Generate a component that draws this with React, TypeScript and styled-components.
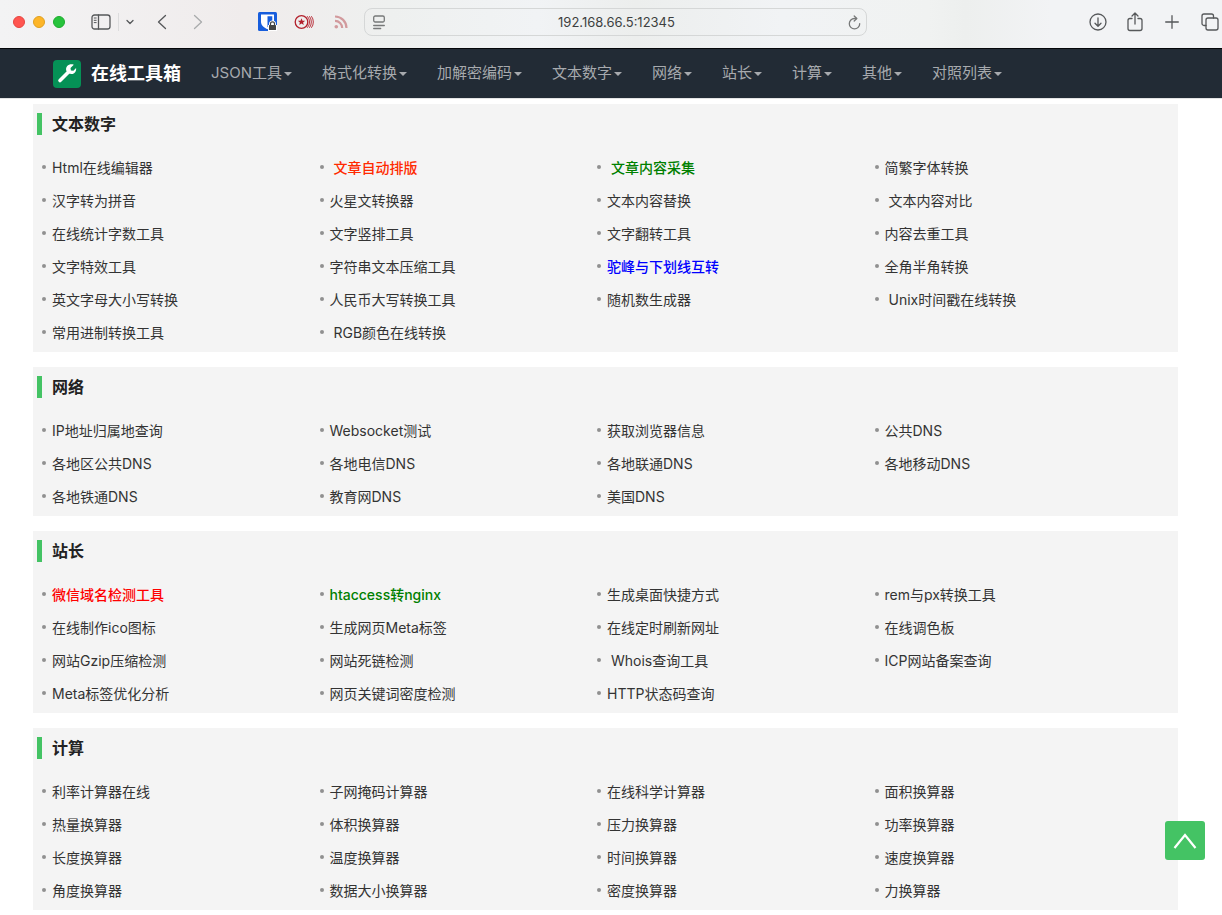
import React from "react";
import styled, { createGlobalStyle } from "styled-components";

const GlobalStyle = createGlobalStyle`
  *, *::before, *::after { box-sizing: border-box; }
  body {
    margin: 0;
    background: #fff;
    color: #333;
    font-family: Inter, "Noto Sans CJK SC", sans-serif;
    font-size: 14px;
  }
  a { color: inherit; text-decoration: none; }
  button { font: inherit; color: inherit; border: 0; padding: 0; background: none; cursor: pointer; }
  ul { list-style: none; margin: 0; padding: 0; }
`;

/* Browser window */

const Toolbar = styled.div`
  display: grid;
  grid-template-columns: 364px minmax(200px, 503px) 1fr;
  align-items: center;
  height: 48px;
  padding-bottom: 4px;
  overflow: hidden;
  color: #56585a;
  background: linear-gradient(90deg, #f3f3f4 0%, #f0ecec 20%, #eef0ef 32%, #f1f3f5 44%, #eceeed 52%, #f1f3f5 64%, #f0f2f1 76%, #edefee 79%, #f2f3f5 86%, #f2f3f5 100%);
`;

const ToolGroup = styled.div`
  display: flex;
  align-items: center;
`;

const Lights = styled(ToolGroup)`
  gap: 8px;
  padding-left: 13px;
  margin-right: 25px;
`;

const Light = styled.button<{ $fill: string; $edge: string }>`
  width: 12px;
  height: 12px;
  border-radius: 50%;
  background: ${(p) => p.$fill};
  border: 1px solid ${(p) => p.$edge};
`;

const ToolButton = styled.button<{ $w: number; $gap?: number; $color?: string }>`
  display: flex;
  flex: none;
  justify-content: center;
  width: ${(p) => p.$w}px;
  margin-left: ${(p) => p.$gap ?? 0}px;
  color: ${(p) => p.$color ?? "inherit"};
`;

const Divider = styled.span`
  width: 1px;
  height: 18px;
  margin-left: 7px;
  background: #dcdcdd;
`;

const AddressBar = styled.form`
  display: flex;
  align-items: center;
  height: 28px;
  padding: 0 5px 0 8px;
  border: 1px solid #d5d7d7;
  border-radius: 8px;
`;

const Address = styled.input`
  flex: 1;
  min-width: 0;
  border: 0;
  outline: 0;
  padding: 0;
  background: none;
  text-align: center;
  color: #3d3f40;
  font-family: Inter, sans-serif;
  font-size: 13px;
`;

const RightTools = styled(ToolGroup)`
  justify-content: flex-end;
  gap: 19px;
  padding-right: 2px;
`;

const Stroke = styled.svg`
  display: block;
  fill: none;
  stroke: currentColor;
  stroke-linecap: round;
  stroke-linejoin: round;
  stroke-width: 1.3;
`;

/* Site header */

const Header = styled.header`
  display: flex;
  align-items: center;
  height: 51px;
  padding: 0 53px;
  background: #222b35;
  border-top: 1px solid #05070a;
  border-bottom: 1px solid #e2e3e4;
`;

const Brand = styled.a`
  display: flex;
  align-items: center;
  gap: 10px;
  margin-right: 30px;
  color: #fff;
  font-size: 18px;
  font-weight: 700;
  line-height: 28px;
  white-space: nowrap;
`;

const Nav = styled.nav`
  display: flex;
  gap: 30px;
  padding-bottom: 2px;
`;

const NavItem = styled.button`
  display: flex;
  align-items: center;
  gap: 2px;
  color: #a7aaae;
  font-size: 15px;
  line-height: 22px;
  white-space: nowrap;

  &::after {
    content: "";
    margin-top: 2px;
    border: 4px solid transparent;
    border-top-color: currentColor;
    border-bottom: 0;
  }
`;

/* Tool lists */

const Main = styled.main`
  display: flex;
  flex-direction: column;
  gap: 15px;
  padding: 5px 44px 5px 33px;
`;

const Panel = styled.section`
  padding: 9px 26px 4px 4px;
  background: #f4f4f4;
`;

const PanelTitle = styled.h2`
  margin: 0 0 15px;
  padding-left: 10px;
  border-left: 5px solid #44c364;
  color: #222;
  font-size: 16px;
  font-weight: 700;
  line-height: 22px;
`;

const LinkGrid = styled.ul`
  display: grid;
  grid-template-columns: repeat(4, 1fr);
  padding-left: 5px;
`;

const LinkItem = styled.li<{ $indent?: boolean; $color?: string }>`
  display: flex;
  align-items: center;
  gap: ${(p) => (p.$indent ? 10 : 6)}px;
  height: 33px;
  color: ${(p) => p.$color ?? "#333"};
  font-weight: ${(p) => (p.$color ? 500 : 400)};
  white-space: nowrap;

  &::before {
    content: "";
    width: 4px;
    height: 4px;
    border-radius: 50%;
    background: #909090;
  }
`;

const BackToTop = styled.button`
  position: fixed;
  right: 17px;
  bottom: 55px;
  display: flex;
  align-items: center;
  justify-content: center;
  width: 40px;
  height: 39px;
  border-radius: 3px;
  color: #fff;
  background: #44c364;
`;

type Tool = { name: string; indent?: boolean; color?: string };
const plain = (...names: string[]): Tool[] => names.map((name) => ({ name }));

const panels: { title: string; tools: Tool[] }[] = [
  {
    title: "文本数字",
    tools: [
      { name: "Html在线编辑器" },
      { name: "文章自动排版", indent: true, color: "#ff2a00" },
      { name: "文章内容采集", indent: true, color: "#008000" },
      ...plain("简繁字体转换", "汉字转为拼音", "火星文转换器", "文本内容替换"),
      { name: "文本内容对比", indent: true },
      ...plain("在线统计字数工具", "文字竖排工具", "文字翻转工具", "内容去重工具", "文字特效工具", "字符串文本压缩工具"),
      { name: "驼峰与下划线互转", color: "#0000ff" },
      ...plain("全角半角转换", "英文字母大小写转换", "人民币大写转换工具", "随机数生成器"),
      { name: "Unix时间戳在线转换", indent: true },
      { name: "常用进制转换工具" },
      { name: "RGB颜色在线转换", indent: true },
    ],
  },
  {
    title: "网络",
    tools: plain(
      "IP地址归属地查询", "Websocket测试", "获取浏览器信息", "公共DNS",
      "各地区公共DNS", "各地电信DNS", "各地联通DNS", "各地移动DNS",
      "各地铁通DNS", "教育网DNS", "美国DNS",
    ),
  },
  {
    title: "站长",
    tools: [
      { name: "微信域名检测工具", color: "#ff0000" },
      { name: "htaccess转nginx", color: "#008000" },
      ...plain(
        "生成桌面快捷方式", "rem与px转换工具",
        "在线制作ico图标", "生成网页Meta标签", "在线定时刷新网址", "在线调色板",
        "网站Gzip压缩检测", "网站死链检测",
      ),
      { name: "Whois查询工具", indent: true },
      ...plain("ICP网站备案查询", "Meta标签优化分析", "网页关键词密度检测", "HTTP状态码查询"),
    ],
  },
  {
    title: "计算",
    tools: plain(
      "利率计算器在线", "子网掩码计算器", "在线科学计算器", "面积换算器",
      "热量换算器", "体积换算器", "压力换算器", "功率换算器",
      "长度换算器", "温度换算器", "时间换算器", "速度换算器",
      "角度换算器", "数据大小换算器", "密度换算器", "力换算器",
    ),
  },
];

const menus = ["JSON工具", "格式化转换", "加解密编码", "文本数字", "网络", "站长", "计算", "其他", "对照列表"];

function BrowserToolbar() {
  return (
    <Toolbar>
      <ToolGroup>
        <Lights>
          <Light aria-label="Close" $fill="#ff5550" $edge="#e64540" />
          <Light aria-label="Minimize" $fill="#fdb528" $edge="#e0a020" />
          <Light aria-label="Zoom" $fill="#27c33c" $edge="#1dac2e" />
        </Lights>
        <ToolButton aria-label="Sidebar" $w={20} $gap={1}>
          <Stroke width="20" height="16" viewBox="0 0 20 16">
            <rect x="1" y="1" width="18" height="14" rx="2.5" />
            <path d="M7.5 1v14" />
            <path d="M3.2 4h2M3.2 6.3h2M3.2 8.6h2" strokeWidth="1" />
          </Stroke>
        </ToolButton>
        <Divider />
        <ToolButton aria-label="Tab groups" $w={8} $gap={7}>
          <Stroke width="8" height="6" viewBox="0 0 8 6"><path d="M1 1.5l3 3 3-3" /></Stroke>
        </ToolButton>
        <ToolButton aria-label="Back" $w={10} $gap={23}>
          <Stroke width="10" height="16" viewBox="0 0 10 16"><path d="M8.5 1.5L1.5 8l7 6.5" /></Stroke>
        </ToolButton>
        <ToolButton aria-label="Forward" $w={10} $gap={26} $color="#a9abac">
          <Stroke width="10" height="16" viewBox="0 0 10 16"><path d="M1.5 1.5l7 6.500-7 6.500" /></Stroke>
        </ToolButton>
        <ToolButton aria-label="Password manager" $w={20} $gap={55}>
          <svg width="20" height="20" viewBox="0 0 20 20">
            <rect width="19" height="19" rx="1.5" fill="#175ddc" />
            <path d="M3 2.5h13V10c0 3.5-3.5 5.800-6.500 7.300C6.500 15.800 3 13.500 3 10z" fill="#fff" />
            <path d="M9.5 4.2h4.800V10c0 2.200-2.600 4-4.800 5.200z" fill="#175ddc" />
            <path d="M10 13h1v-1a3.500 3.500 0 0 1 7 0v1h1v6h-9z" fill="#fff" />
            <rect x="11" y="13" width="7" height="5" rx="0.5" fill="#444" />
            <path d="M12.5 13v-1.200a2 2 0 0 1 4 0V13" fill="none" stroke="#444" strokeWidth="1.2" />
          </svg>
        </ToolButton>
        <ToolButton aria-label="Media sniffer" $w={20} $gap={16} $color="#b3202c">
          <Stroke width="20" height="16" viewBox="0 0 20 16">
            <circle cx="7.5" cy="8" r="6.3" />
            <path d="M7.5 4.2l1 2.500 2.700.1-2.100 1.700.7 2.600-2.300-1.500-2.300 1.500.7-2.600-2.100-1.700 2.700-.1z" fill="currentColor" stroke="none" />
            <path d="M13.5 2.5a8 8 0 0 1 0 11M15.600 2.500a9 9 0 0 1 0 11M17.600 2.500a9 9 0 0 1 0 11" strokeWidth="0.9" />
          </Stroke>
        </ToolButton>
        <ToolButton aria-label="RSS" $w={14} $gap={20} $color="#d29a9d">
          <svg width="14" height="14" viewBox="0 0 14 14" fill="none" stroke="currentColor" strokeWidth="2.2">
            <circle cx="2.3" cy="11.7" r="1.8" fill="currentColor" stroke="none" />
            <path d="M1 5.800a7.200 7.200 0 0 1 7.200 7.200M1 1.500A11.500 11.500 0 0 1 12.500 13" />
          </svg>
        </ToolButton>
      </ToolGroup>
      <AddressBar onSubmit={(e) => e.preventDefault()}>
        <ToolButton type="button" aria-label="Page menu" $w={12} $color="#777979">
          <Stroke width="12" height="15" viewBox="0 0 12 15">
            <rect x="0.7" y="1" width="10.6" height="6" rx="1.5" />
            <path d="M0.7 10.5h10.600M0.700 13.500h7" />
          </Stroke>
        </ToolButton>
        <Address aria-label="Address" defaultValue="192.168.66.5:12345" />
        <ToolButton type="submit" aria-label="Reload" $w={13} $color="#777979">
          <Stroke width="13" height="15" viewBox="0 0 13 15">
            <path d="M11.7 8.7A5.200 5.200 0 1 1 6.500 3.500h2" />
            <path d="M6.2 1l2.600 2.500-2.600 2.500" />
          </Stroke>
        </ToolButton>
      </AddressBar>
      <RightTools>
        <ToolButton aria-label="Downloads" $w={18}>
          <Stroke width="18" height="18" viewBox="0 0 18 18">
            <circle cx="9" cy="9" r="8" />
            <path d="M9 5v8M6 10.200l3 3 3-3" />
          </Stroke>
        </ToolButton>
        <ToolButton aria-label="Share" $w={18}>
          <Stroke width="16" height="20" viewBox="0 0 16 20">
            <path d="M5 6.500H3A2 2 0 0 0 1 8.500v8a2 2 0 0 0 2 2h10a2 2 0 0 0 2-2v-8a2 2 0 0 0-2-2h-2M8 12V1.200M5 4l3-3 3 3" />
          </Stroke>
        </ToolButton>
        <ToolButton aria-label="New tab" $w={18}>
          <Stroke width="14" height="14" viewBox="0 0 14 14"><path d="M7 .7v12.600M.7 7h12.600" /></Stroke>
        </ToolButton>
        <ToolButton aria-label="Tab overview" $w={20}>
          <Stroke width="18" height="18" viewBox="0 0 18 18">
            <rect x="5" y="5" width="12" height="12" rx="2" />
            <path d="M5 12.500H3a2 2 0 0 1-2-2V3a2 2 0 0 1 2-2h7.500a2 2 0 0 1 2 2v2" />
          </Stroke>
        </ToolButton>
      </RightTools>
    </Toolbar>
  );
}

export default function App() {
  return (
    <>
      <GlobalStyle />
      <BrowserToolbar />
      <Header>
        <Brand href="#">
          <svg width="28" height="28" viewBox="0 0 28 28" aria-hidden="true">
            <rect width="28" height="28" rx="4" fill="#059156" />
            <path d="M7 20.500L15 12.500" stroke="#fff" strokeWidth="3.6" strokeLinecap="round" />
            <path d="M20.800 4.700l-3.300 3.200.4 2.500 2.500.4 2.700-2.700c.3 2.300-.4 4-2 5.100-1.700 1.200-3.700 1-5.200.4l-2.500-2.500c-.6-1.800-.5-3.500.8-5 1.500-1.700 4-2.100 6.600-1.400z" fill="#fff" />
          </svg>
          在线工具箱
        </Brand>
        <Nav>
          {menus.map((m) => (
            <NavItem key={m}>{m}</NavItem>
          ))}
        </Nav>
      </Header>
      <Main>
        {panels.map((panel) => (
          <Panel key={panel.title}>
            <PanelTitle>{panel.title}</PanelTitle>
            <LinkGrid>
              {panel.tools.map((t) => (
                <LinkItem key={t.name} $indent={t.indent} $color={t.color}>
                  <a href="#">{t.name}</a>
                </LinkItem>
              ))}
            </LinkGrid>
          </Panel>
        ))}
      </Main>
      <BackToTop aria-label="回到顶部">
        <svg width="24" height="16" viewBox="0 0 24 16" fill="none" stroke="currentColor" strokeWidth="2.2">
          <path d="M1.5 15L12 2l10.500 13" />
        </svg>
      </BackToTop>
    </>
  );
}
